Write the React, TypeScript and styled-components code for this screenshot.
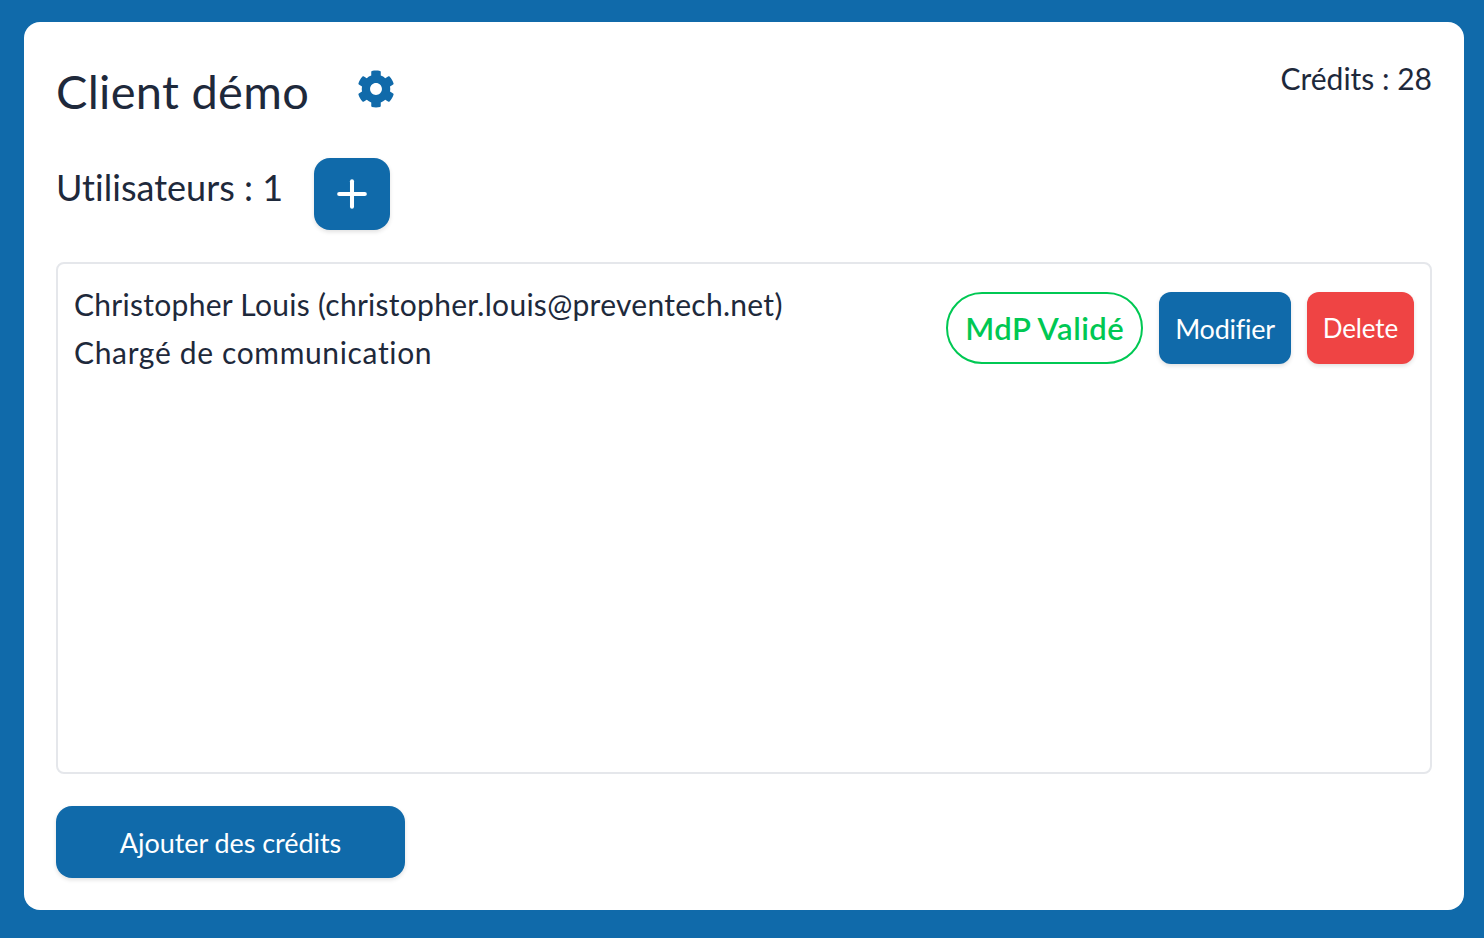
import React from 'react';
import styled, { createGlobalStyle } from 'styled-components';
import { FaCog } from 'react-icons/fa';
import { Plus } from 'lucide-react';

const BLUE = '#106aaa';

const GlobalStyle = createGlobalStyle`
  html, body {
    margin: 0;
    height: 100%;
    background: ${BLUE};
    font-family: 'Lato', 'Liberation Sans', sans-serif;
    font-variant-ligatures: none;
    color: #1e293b;
  }
`;

const Page = styled.div`
  box-sizing: border-box;
  height: 938px;
  padding: 22px 20px 28px 24px;
  display: flex;
`;

const Card = styled.main`
  flex: 1;
  box-sizing: border-box;
  background: white;
  border-radius: 16px;
  padding: 32px;
  display: flex;
  flex-direction: column;
`;

const Header = styled.div`
  display: flex;
  justify-content: space-between;
  align-items: flex-start;
  height: 104px;
`;

const TitleRow = styled.div`
  display: flex;
  align-items: flex-start;
  gap: 48px;
`;

const Title = styled.h1`
  margin: 8px 0 0;
  font-size: 47px;
  line-height: 58px;
  font-weight: 400;
  letter-spacing: 0.3px;
`;

const GearButton = styled.span`
  display: flex;
  margin-top: 16px;
  color: ${BLUE};
`;

const Credits = styled.div`
  margin-top: 6px;
  font-size: 30px;
  line-height: 36px;
`;

const UsersRow = styled.div`
  display: flex;
  align-items: flex-start;
  gap: 31px;
`;

const UsersLabel = styled.h2`
  margin: 7px 0 0;
  font-size: 36px;
  line-height: 44px;
  font-weight: 400;
  letter-spacing: 0.03px;
`;

const Button = styled.button<{ $color?: string; $size?: number; $spacing?: number }>`
  height: 72px;
  box-sizing: border-box;
  border: 0;
  border-radius: 12px;
  padding: 0 16px;
  display: inline-flex;
  align-items: center;
  justify-content: center;
  background: ${(p) => p.$color || BLUE};
  color: white;
  font-family: inherit;
  font-variant-ligatures: none;
  font-size: ${(p) => p.$size || 27}px;
  letter-spacing: ${(p) => p.$spacing || 0}px;
  box-shadow: 0 2px 4px rgba(0, 0, 0, 0.12);
`;

const AddButton = styled(Button)`
  width: 76px;
  padding: 0;
  border-radius: 16px;
`;

const UserList = styled.section`
  margin-top: 32px;
  height: 512px;
  box-sizing: border-box;
  border: 2px solid #e5e7eb;
  border-radius: 8px;
  padding: 16px;
`;

const UserRow = styled.div`
  display: flex;
  justify-content: space-between;
  align-items: flex-start;
`;

const UserInfo = styled.div`
  font-size: 30px;
  line-height: 48px;
`;

const UserName = styled.div`
  letter-spacing: 0.28px;
`;

const UserRole = styled.div`
  letter-spacing: 0.65px;
`;

const Actions = styled.div`
  display: flex;
  gap: 16px;
  margin-top: 12px;
`;

const StatusPill = styled.span`
  width: 197px;
  height: 72px;
  box-sizing: border-box;
  border: 2px solid #00c853;
  border-radius: 36px;
  display: inline-flex;
  align-items: center;
  justify-content: center;
  color: #00c853;
  font-size: 31px;
  font-weight: 600;
  letter-spacing: 0.5px;
`;

const Footer = styled.div`
  margin-top: 32px;
`;

const CreditsButton = styled(Button)`
  width: 349px;
  border-radius: 16px;
`;

export default function App() {
  return (
    <>
      <GlobalStyle />
      <Page>
        <Card>
          <Header>
            <TitleRow>
              <Title>Client démo</Title>
              <GearButton>
                <FaCog size={38} />
              </GearButton>
            </TitleRow>
            <Credits>Crédits : 28</Credits>
          </Header>
          <UsersRow>
            <UsersLabel>Utilisateurs : 1</UsersLabel>
            <AddButton>
              <Plus size={44} strokeWidth={2.2} />
            </AddButton>
          </UsersRow>
          <UserList>
            <UserRow>
              <UserInfo>
                <UserName>Christopher Louis (christopher.louis@preventech.net)</UserName>
                <UserRole>Chargé de communication</UserRole>
              </UserInfo>
              <Actions>
                <StatusPill>MdP Validé</StatusPill>
                <Button $spacing={-0.25}>Modifier</Button>
                <Button $color="#ef4444" $size={26} $spacing={-0.15}>Delete</Button>
              </Actions>
            </UserRow>
          </UserList>
          <Footer>
            <CreditsButton $spacing={-0.06}>Ajouter des crédits</CreditsButton>
          </Footer>
        </Card>
      </Page>
    </>
  );
}
